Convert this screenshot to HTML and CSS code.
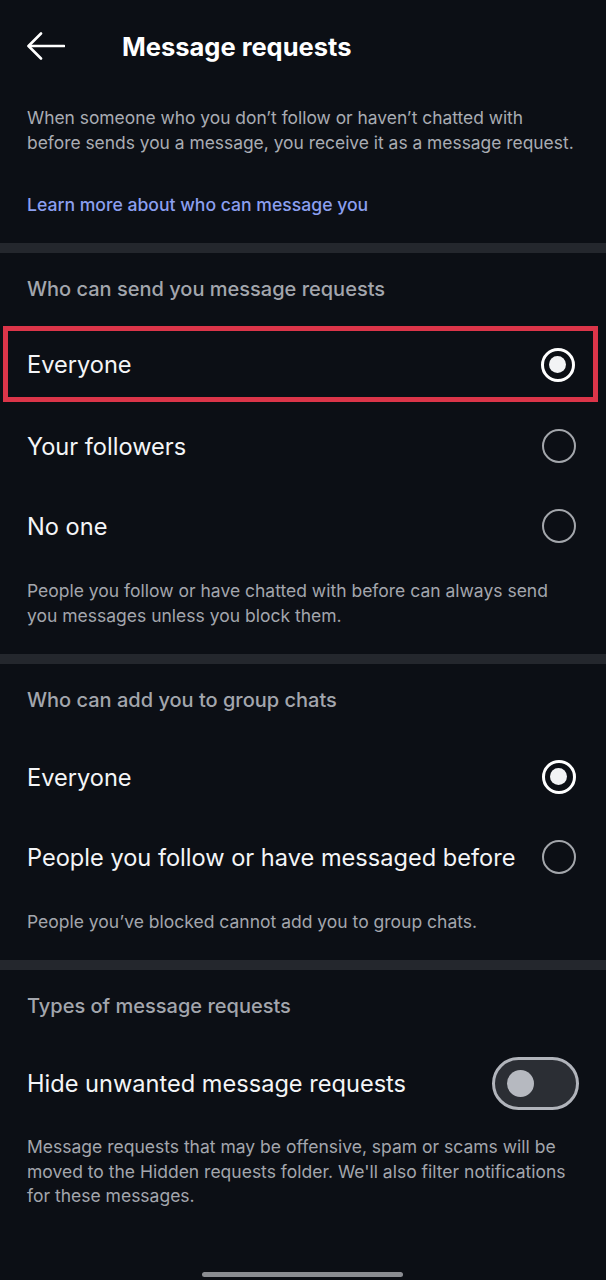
FILE: index.html
```html
<!DOCTYPE html>
<html lang="en">
<head>
    <meta charset="UTF-8">
    <meta name="viewport" content="width=device-width, initial-scale=1.0">
    <title>Message requests</title>
    <link rel="stylesheet" href="styles.css">
</head>
<body>
    <div class="screen">
        <header class="topbar">
            <button class="back" aria-label="Back">
                <svg width="38" height="28" viewBox="0 0 38 28" fill="none" stroke="#fff" stroke-width="2.6" stroke-linecap="round" stroke-linejoin="round">
                    <path d="M37 14H2"/>
                    <path d="M14 1.5L1.5 14L14 26.5"/>
                </svg>
            </button>
            <h1>Message requests</h1>
        </header>

        <div class="intro">
            <p class="intro-text">When someone who you don’t follow or haven’t chatted with before sends you a message, you receive it as a message request.</p>
            <a class="learn" href="#">Learn more about who can message you</a>
        </div>

        <div class="divider"></div>

        <section class="group">
            <h2>Who can send you message requests</h2>
            <label class="option highlight">
                <span>Everyone</span>
                <span class="radio checked"></span>
            </label>
            <label class="option">
                <span>Your followers</span>
                <span class="radio"></span>
            </label>
            <label class="option">
                <span>No one</span>
                <span class="radio"></span>
            </label>
            <p class="note">People you follow or have chatted with before can always send you messages unless you block them.</p>
        </section>

        <div class="divider"></div>

        <section class="group">
            <h2>Who can add you to group chats</h2>
            <label class="option">
                <span>Everyone</span>
                <span class="radio checked"></span>
            </label>
            <label class="option">
                <span>People you follow or have messaged before</span>
                <span class="radio"></span>
            </label>
            <p class="note">People you’ve blocked cannot add you to group chats.</p>
        </section>

        <div class="divider"></div>

        <section class="group">
            <h2>Types of message requests</h2>
            <label class="option">
                <span>Hide unwanted message requests</span>
                <span class="toggle"><span class="knob"></span></span>
            </label>
            <p class="note small">Message requests that may be offensive, spam or scams will be moved to the Hidden requests folder. We'll also filter notifications for these messages.</p>
        </section>

        <div class="home-bar"></div>
    </div>
</body>
</html>
```

FILE: styles.css
```css
* {
    box-sizing: border-box;
}
body {
    margin: 0;
    background: #0c0f15;
    color: #fff;
    font-family: Inter, "Noto Sans", sans-serif;
}
.screen {
    width: 606px;
    height: 1280px;
    position: relative;
    overflow: hidden;
}

/* top bar */
.topbar {
    height: 92px;
    display: flex;
    align-items: center;
    padding-left: 27px;
}
.back {
    background: none;
    border: none;
    padding: 0;
    width: 38px;
    height: 28px;
    display: flex;
}
.topbar h1 {
    margin: 0 0 0 57px;
    font-size: 25.5px;
    font-weight: 700;
}

/* intro */
.intro {
    padding: 13px 30px 26px 27px;
}
.intro-text {
    margin: 0;
    font-size: 17.4px;
    line-height: 25px;
    color: #a9acb3;
}
.learn {
    display: block;
    margin-top: 37px;
    font-size: 17.6px;
    line-height: 25px;
    font-weight: 500;
    color: #8b9ff0;
    text-decoration: none;
}

.divider {
    height: 10px;
    background: #24272d;
}

/* settings groups */
.group {
    padding: 23px 0 26px;
}
.group h2 {
    margin: 0 27px 24px;
    font-size: 20px;
    line-height: 26px;
    font-weight: 500;
    color: #a3a6ad;
}
.option {
    height: 80px;
    padding: 0 30px 0 27px;
    display: flex;
    align-items: center;
    justify-content: space-between;
    font-size: 23.6px;
    color: #f4f5f7;
}
/* red marker box around the chosen row */
.option.highlight {
    height: 76px;
    margin: 0 8px 4px 3px;
    padding: 1px 18px 0 19px;
    border: 5px solid #dc3549;
}
.radio {
    width: 34px;
    height: 34px;
    border-radius: 50%;
    border: 2.5px solid #a3a6ab;
    flex-shrink: 0;
    position: relative;
}
.radio.checked {
    border: 3.5px solid #fff;
}
.radio.checked::after {
    content: "";
    position: absolute;
    top: 5px;
    left: 5px;
    width: 17px;
    height: 17px;
    border-radius: 50%;
    background: #f2f3f5;
}
.toggle {
    width: 87px;
    height: 53px;
    margin-right: -3px;
    border-radius: 27px;
    border: 3.5px solid #b1b4bb;
    background: #2b2e34;
    display: flex;
    align-items: center;
    padding-left: 12px;
    flex-shrink: 0;
}
.knob {
    width: 27px;
    height: 27px;
    border-radius: 50%;
    background: #b6b9c0;
}
.note {
    margin: 12px 27px 0;
    font-size: 17.5px;
    line-height: 25px;
    color: #a3a6ad;
}
.note.small {
    line-height: 24.5px;
}

/* gesture handle */
.home-bar {
    position: absolute;
    left: 202px;
    bottom: 3px;
    width: 201px;
    height: 5px;
    border-radius: 3px;
    background: #8b8d92;
}
```
